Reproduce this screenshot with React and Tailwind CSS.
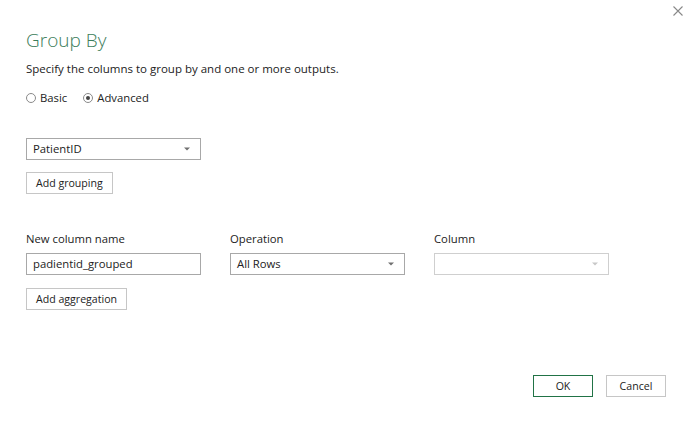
import React from 'react';

const font = { fontFamily: '"Open Sans", "Noto Sans", sans-serif' };

const Caret = ({ light }) => (
  <svg width="6" height="4" viewBox="0 0 6 4" className="shrink-0">
    <path d="M0 0.5 H6 L3 3.5 Z" fill={light ? '#c8c8c8' : '#707070'} />
  </svg>
);

const Select = ({ value, disabled }) => (
  <div
    className={`h-[22px] w-[175px] flex items-center justify-between pl-[6px] pr-[10px] border bg-white text-[11.3px] text-[#222] ${
      disabled ? 'border-[#cfcfcf]' : 'border-[#a8a8a8]'
    }`}
  >
    <span>{value}</span>
    <Caret light={disabled} />
  </div>
);

const Btn = ({ children, primary, className = '' }) => (
  <button
    className={`h-[22px] px-[9px] border bg-white text-[10.6px] text-[#222] leading-none ${
      primary ? 'border-[#217346]' : 'border-[#c6c6c6]'
    } ${className}`}
  >
    {children}
  </button>
);

const Radio = ({ checked, label }) => (
  <label className="flex items-center gap-[4px]">
    <span className="w-[10px] h-[10px] rounded-full border border-[#8a8a8a] flex items-center justify-center">
      {checked && <span className="w-[4px] h-[4px] rounded-full bg-[#444]" />}
    </span>
    <span>{label}</span>
  </label>
);

export default function App() {
  return (
    <div className="relative w-[693px] h-[424px] bg-white text-[#222] overflow-hidden" style={font}>
      <button className="absolute right-[8px] top-[4px] w-[14px] h-[14px] flex items-center justify-center">
        <svg width="10" height="10" viewBox="0 0 10 10">
          <path d="M0.5 0.5 L9.5 9.5 M9.5 0.5 L0.5 9.5" stroke="#888" strokeWidth="1.1" />
        </svg>
      </button>

      <div className="pl-[26px] pt-[26px] flex flex-col">
        <h1 className="text-[19px] leading-[28px] font-light text-[#3b7d5a]">Group By</h1>
        <p className="mt-[6px] text-[11.5px] leading-[18px]">
          Specify the columns to group by and one or more outputs.
        </p>

        <div className="mt-[11px] flex items-center gap-[16px] text-[11.3px] leading-[18px]">
          <Radio label="Basic" />
          <Radio checked label="Advanced" />
        </div>

        <div className="mt-[31px] flex">
          <Select value="PatientID" />
        </div>
        <div className="mt-[12px] flex">
          <Btn>Add grouping</Btn>
        </div>

        <div className="mt-[36px] grid grid-cols-[175px_175px_175px] gap-x-[29px] gap-y-[5px] text-[11.3px]">
          <span className="leading-[18px]">New column name</span>
          <span className="leading-[18px]">Operation</span>
          <span className="leading-[18px]">Column</span>
          <div className="h-[22px] w-[175px] flex items-center pl-[6px] border border-[#a8a8a8]">
            padientid_grouped
          </div>
          <Select value="All Rows" />
          <Select value="" disabled />
        </div>

        <div className="mt-[13px] flex">
          <Btn>Add aggregation</Btn>
        </div>

        <div className="mt-[65px] flex justify-end gap-[13px] pr-[27px]">
          <Btn primary className="w-[60px]">OK</Btn>
          <Btn className="w-[60px]">Cancel</Btn>
        </div>
      </div>
    </div>
  );
}
